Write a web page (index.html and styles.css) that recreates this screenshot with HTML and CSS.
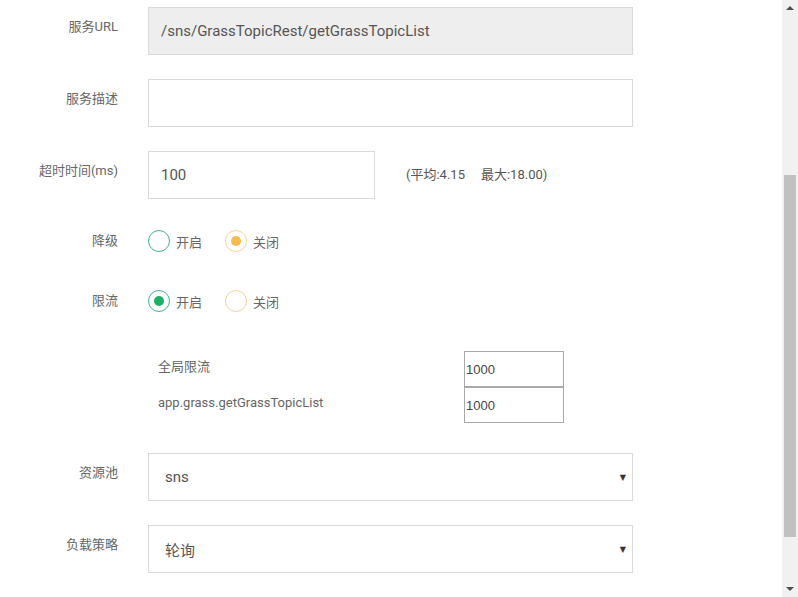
FILE: index.html
```html
<!DOCTYPE html>
<html lang="zh-CN">
<head>
<meta charset="utf-8">
<title>服务配置</title>
<link rel="stylesheet" href="styles.css">
</head>
<body>
<div class="page">
  <main class="main">
    <form class="form">
      <div class="row">
        <label class="label">服务URL</label>
        <input class="field field-wide field-readonly" type="text" value="/sns/GrassTopicRest/getGrassTopicList" readonly>
      </div>
      <div class="row">
        <label class="label">服务描述</label>
        <input class="field field-wide" type="text" value="">
      </div>
      <div class="row">
        <label class="label">超时时间(ms)</label>
        <input class="field field-short" type="text" value="100">
        <span class="stats">(平均:4.15<span class="stats-gap">最大:18.00)</span></span>
      </div>
      <div class="row row-radio">
        <label class="label">降级</label>
        <div class="radios">
          <span class="radio"><span class="dot dot-green"></span>开启</span>
          <span class="radio"><span class="dot dot-orange checked"></span>关闭</span>
        </div>
      </div>
      <div class="row row-radio row-limit">
        <label class="label">限流</label>
        <div class="radios">
          <span class="radio"><span class="dot dot-green checked"></span>开启</span>
          <span class="radio"><span class="dot dot-orange"></span>关闭</span>
        </div>
      </div>
      <div class="limits">
        <div class="limit-row">
          <span class="limit-name">全局限流</span>
          <input class="limit-input" type="text" value="1000">
        </div>
        <div class="limit-row">
          <span class="limit-name">app.grass.getGrassTopicList</span>
          <input class="limit-input" type="text" value="1000">
        </div>
      </div>
      <div class="row">
        <label class="label">资源池</label>
        <div class="select"><span>sns</span><span class="arrow">▼</span></div>
      </div>
      <div class="row">
        <label class="label">负载策略</label>
        <div class="select"><span>轮询</span><span class="arrow">▼</span></div>
      </div>
    </form>
  </main>
  <div class="scrollbar">
    <div class="sb-btn"><span class="tri tri-up"></span></div>
    <div class="sb-track">
      <div class="sb-space-top"></div>
      <div class="sb-thumb"></div>
    </div>
    <div class="sb-btn"><span class="tri tri-down"></span></div>
  </div>
</div>
</body>
</html>
```

FILE: styles.css
```css
html, body {
  margin: 0;
  padding: 0;
  height: 100%;
  overflow: hidden;
  background: #fff;
}
body {
  font-family: Roboto, "Noto Sans CJK SC", sans-serif;
  color: #555;
}
.page {
  display: flex;
  height: 597px;
  width: 798px;
}
.main {
  width: 782px;
  overflow: hidden;
}
.form {
  padding-top: 7px;
}
.row {
  display: flex;
  align-items: flex-start;
  margin-bottom: 24px;
}
.label {
  width: 118px;
  margin-right: 30px;
  text-align: right;
  font-size: 13px;
  line-height: 18px;
  padding-top: 11px;
  color: #666;
  flex: none;
}
.field {
  box-sizing: border-box;
  height: 48px;
  border: 1px solid #d9d9d9;
  padding: 0 12px;
  font-family: Roboto, "Noto Sans CJK SC", sans-serif;
  font-size: 15px;
  color: #555;
  background: #fff;
  outline: none;
  margin: 0;
}
.field-wide { width: 485px; }
.field-short { width: 227px; }
.field-readonly { background: #eeeeee; }
.stats {
  font-size: 13px;
  color: #555;
  margin-left: 31px;
  line-height: 48px;
}
.stats-gap { margin-left: 16px; }
.row-radio {
  align-items: center;
  height: 36px;
}
.row-radio .label { padding-top: 0; }
.row-limit { margin-bottom: 32px; }
.radios {
  display: flex;
  align-items: center;
}
.radio {
  display: flex;
  align-items: center;
  font-size: 13px;
  color: #666;
  margin-right: 23px;
}
.dot {
  box-sizing: border-box;
  width: 22px;
  height: 22px;
  border-radius: 50%;
  border: 1px solid;
  margin-right: 6px;
  display: flex;
  align-items: center;
  justify-content: center;
}
.dot-green { border-color: #3fb58c; }
.dot-orange { border-color: #f6d29b; }
.dot.checked::after {
  content: "";
  width: 10px;
  height: 10px;
  border-radius: 50%;
}
.dot-green.checked::after { background: #19b262; }
.dot-orange.checked::after { background: #f8b94e; }
.limits {
  margin-left: 148px;
  margin-bottom: 30px;
}
.limit-row {
  display: grid;
  grid-template-columns: 316px 100px;
  align-items: center;
}
.limit-name {
  padding-left: 10px;
  padding-bottom: 4px;
  font-size: 13px;
  line-height: 16px;
  color: #666;
}
.limit-input {
  box-sizing: border-box;
  width: 100px;
  height: 36px;
  border: 1px solid #a9a9a9;
  margin: 0;
  padding: 0 1px;
  font-family: "Liberation Sans", Arial, sans-serif;
  font-size: 13px;
  color: #444;
  outline: none;
}
.select {
  box-sizing: border-box;
  width: 485px;
  height: 48px;
  border: 1px solid #d9d9d9;
  display: flex;
  align-items: center;
  justify-content: space-between;
  padding: 0 6px 0 16px;
  font-size: 15px;
  color: #555;
}
.arrow {
  font-size: 8px;
  color: #333;
  font-family: "DejaVu Sans", sans-serif;
}
.scrollbar {
  width: 16px;
  background: #f1f1f1;
  display: flex;
  flex-direction: column;
}
.sb-btn {
  height: 16px;
  display: flex;
  align-items: center;
  justify-content: center;
}
.tri {
  width: 0;
  height: 0;
  border-left: 4px solid transparent;
  border-right: 4px solid transparent;
}
.tri-up { border-bottom: 4px solid #505050; }
.tri-down { border-top: 4px solid #505050; }
.sb-track {
  flex: 1;
  padding: 0 2px;
}
.sb-space-top { height: 159px; }
.sb-thumb {
  height: 362px;
  background: #c1c1c1;
}
```
